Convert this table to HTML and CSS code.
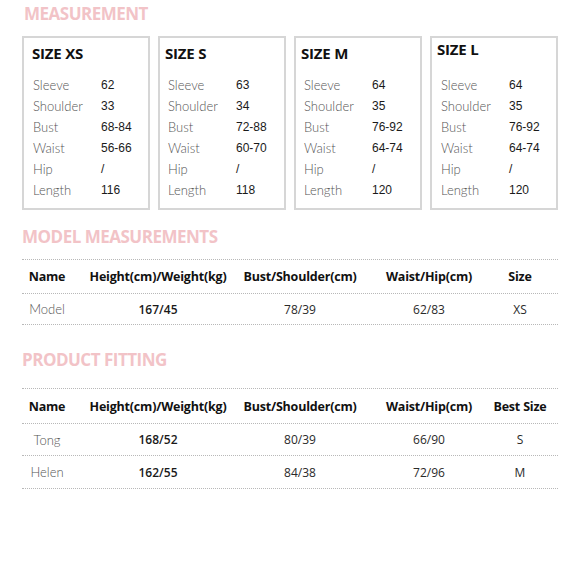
FILE: index.html
```html
<!DOCTYPE html>
<html>
<head>
<meta charset="utf-8">
<link rel="stylesheet" href="styles.css">
</head>
<body>
<div class="page">
  <h2 class="title title-first">MEASUREMENT</h2>
  <div class="boxes">
    <div class="box box-xs">
      <div class="size">SIZE XS</div>
      <div class="rows">
        <span class="lbl">Sleeve</span><span class="val">62</span>
        <span class="lbl">Shoulder</span><span class="val">33</span>
        <span class="lbl">Bust</span><span class="val">68-84</span>
        <span class="lbl">Waist</span><span class="val">56-66</span>
        <span class="lbl">Hip</span><span class="val">/</span>
        <span class="lbl">Length</span><span class="val">116</span>
      </div>
    </div>
    <div class="box">
      <div class="size">SIZE S</div>
      <div class="rows">
        <span class="lbl">Sleeve</span><span class="val">63</span>
        <span class="lbl">Shoulder</span><span class="val">34</span>
        <span class="lbl">Bust</span><span class="val">72-88</span>
        <span class="lbl">Waist</span><span class="val">60-70</span>
        <span class="lbl">Hip</span><span class="val">/</span>
        <span class="lbl">Length</span><span class="val">118</span>
      </div>
    </div>
    <div class="box">
      <div class="size">SIZE M</div>
      <div class="rows">
        <span class="lbl">Sleeve</span><span class="val">64</span>
        <span class="lbl">Shoulder</span><span class="val">35</span>
        <span class="lbl">Bust</span><span class="val">76-92</span>
        <span class="lbl">Waist</span><span class="val">64-74</span>
        <span class="lbl">Hip</span><span class="val">/</span>
        <span class="lbl">Length</span><span class="val">120</span>
      </div>
    </div>
    <div class="box box-l">
      <div class="size">SIZE L</div>
      <div class="rows">
        <span class="lbl">Sleeve</span><span class="val">64</span>
        <span class="lbl">Shoulder</span><span class="val">35</span>
        <span class="lbl">Bust</span><span class="val">76-92</span>
        <span class="lbl">Waist</span><span class="val">64-74</span>
        <span class="lbl">Hip</span><span class="val">/</span>
        <span class="lbl">Length</span><span class="val">120</span>
      </div>
    </div>
  </div>

  <h2 class="title title-model">MODEL MEASUREMENTS</h2>
  <div class="table">
    <div class="tr th th-model">
      <div class="td">Name</div>
      <div class="td">Height(cm)/Weight(kg)</div>
      <div class="td">Bust/Shoulder(cm)</div>
      <div class="td">Waist/Hip(cm)</div>
      <div class="td">Size</div>
    </div>
    <div class="tr">
      <div class="td name">Model</div>
      <div class="td strong">167/45</div>
      <div class="td">78/39</div>
      <div class="td">62/83</div>
      <div class="td">XS</div>
    </div>
  </div>

  <h2 class="title title-product">PRODUCT FITTING</h2>
  <div class="table">
    <div class="tr th th-product">
      <div class="td">Name</div>
      <div class="td">Height(cm)/Weight(kg)</div>
      <div class="td">Bust/Shoulder(cm)</div>
      <div class="td">Waist/Hip(cm)</div>
      <div class="td">Best Size</div>
    </div>
    <div class="tr">
      <div class="td name">Tong</div>
      <div class="td strong">168/52</div>
      <div class="td">80/39</div>
      <div class="td">66/90</div>
      <div class="td">S</div>
    </div>
    <div class="tr tr-last">
      <div class="td name">Helen</div>
      <div class="td strong">162/55</div>
      <div class="td">84/38</div>
      <div class="td">72/96</div>
      <div class="td">M</div>
    </div>
  </div>
</div>
</body>
</html>
```

FILE: styles.css
```css
* { box-sizing: border-box; }
html, body { margin: 0; padding: 0; background: #fff; }
body { font-family: "Open Sans", "Liberation Sans", sans-serif; color: #222; }

.page { padding: 0 22px; width: 580px; }

.title {
  margin: 0;
  font-size: 17px;
  line-height: 22px;
  font-weight: 700;
  color: #f2c3c7;
  padding-left: 2px;
  letter-spacing: -0.5px;
}
.title-first { margin-top: 3px; }
.title-model { margin-top: 16px; margin-bottom: 11px; padding-left: 0; }
.title-product { margin-top: 24px; margin-bottom: 17px; padding-left: 0; }

.boxes {
  display: flex;
  gap: 8px;
  margin-top: 11px;
}
.box {
  width: 128px;
  height: 174px;
  border: 2px solid #d6d6d6;
  padding: 6px 0 0 5px;
}
.size {
  font-size: 15px;
  line-height: 18px;
  font-weight: 700;
  color: #111;
  letter-spacing: -0.2px;
}
.box-xs .size { padding-left: 3px; }
.box-l .size { margin-top: -4px; }

.rows {
  margin-top: 13px;
  display: grid;
  grid-template-columns: 68px 1fr;
  grid-auto-rows: 21px;
  padding-left: 3px;
}
.box-xs .rows { padding-left: 4px; }
.box-l .rows { margin-top: 17px; padding-left: 4px; }
.lbl {
  font-family: "Lato", "Open Sans", sans-serif;
  font-weight: 300;
  font-size: 13px;
  line-height: 21px;
  color: #555;
}
.val {
  font-family: "Liberation Sans", Arial, sans-serif;
  font-size: 12px;
  line-height: 21px;
  color: #1a1a1a;
}

.table { width: 536px; }
.tr {
  display: grid;
  grid-template-columns: 50px 172px 112px 146px 36px;
  height: 32px;
  border-top: 1px dotted #b8b8b8;
  align-items: center;
}
.table .tr:last-child { border-bottom: 1px dotted #b8b8b8; }
.tr-last { height: 34px; }
.th-model { height: 34px; }
.th-product { height: 35px; }
.td {
  display: flex;
  justify-content: center;
  white-space: nowrap;
  font-size: 12px;
  color: #2a2a2a;
}
.th .td { font-weight: 700; color: #111; font-size: 12.5px; letter-spacing: -0.2px; }
.td.name { font-family: "Lato", "Open Sans", sans-serif; font-weight: 300; font-size: 13px; color: #555; }
.td.strong { font-weight: 600; color: #1a1a1a; }
```
